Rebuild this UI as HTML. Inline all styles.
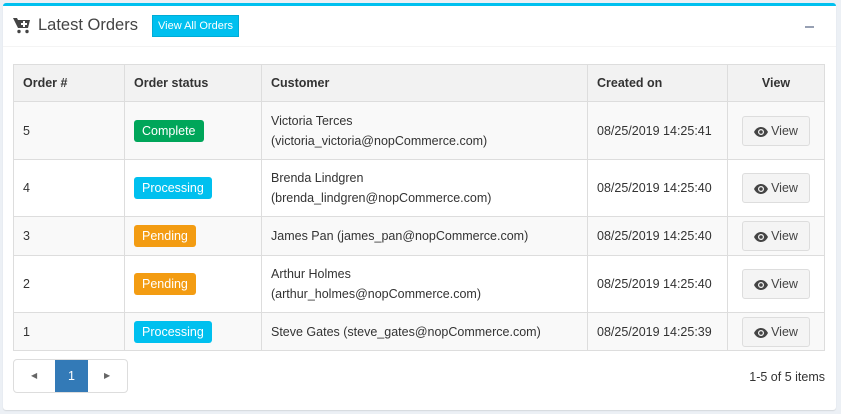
<!DOCTYPE html>
<html><head><style>
*{box-sizing:border-box;margin:0;padding:0}
body{width:841px;height:414px;background:#ecf0f5;font-family:"Liberation Sans",sans-serif;font-size:12.5px;color:#333;position:relative;overflow:hidden}
.box{position:absolute;left:3px;top:3px;width:833px;height:407px;background:#fff;border-top:3px solid #00c0ef;border-radius:3px;box-shadow:0 1px 1px rgba(0,0,0,.1)}
.hdr{height:41px;border-bottom:1px solid #f4f4f4;position:relative}
.title{position:absolute;left:35px;top:10px;font-size:16.5px;color:#444}
.cart{position:absolute;left:10px;top:12px}
.btnall{position:absolute;left:149px;top:9px;background:#00c0ef;color:#fff;font-size:11px;padding:4px 5px;border:1px solid #00acd6}
.minus{position:absolute;right:22px;top:20px;width:9px;height:2px;background:#97a0b3}
table{position:absolute;left:10px;top:58px;width:812px;border-collapse:collapse}
td,th{border:1px solid #ddd;padding:0 9px;text-align:left;vertical-align:middle;line-height:20px}
th{background:#f2f2f2;height:37px;font-weight:bold}
tr.o td{background:#f9f9f9}
.lbl{display:inline-block;color:#fff;padding:1px 8px;border-radius:3px;font-size:12.5px}
.g{background:#00a65a}.b{background:#00c0ef}.y{background:#f39c12}
.vb{display:inline-block;border:1px solid #ddd;background:#f4f4f4;border-radius:3px;padding:4px 11px;color:#444}
.vb svg{vertical-align:-2px;margin-right:3px}
.pg{position:absolute;left:10px;top:353px;width:115px;height:34px;border:1px solid #ddd;border-radius:4px;overflow:hidden}
.pg .a{position:absolute;left:41px;top:0;width:33px;height:34px;background:#337ab7;color:#fff;text-align:center;line-height:33px}
.info{position:absolute;right:11px;top:364px}
</style></head><body>
<div class="box">
<div class="hdr">
<svg class="cart" width="18" height="16" viewBox="0 0 18 16"><path d="M0 0h4l1 2h12l-2 8H5z" fill="#444"/><circle cx="6" cy="13.5" r="1.7" fill="#444"/><circle cx="14" cy="13.5" r="1.7" fill="#444"/><path d="M10 3h2v2h2v2h-2v2h-2V7H8V5h2z" fill="#fff"/></svg>
<div class="title">Latest Orders</div>
<div class="btnall">View All Orders</div>
<div class="minus"></div>
</div>
<table>
<tr><th style="width:111px">Order #</th><th style="width:137px">Order status</th><th style="width:326px">Customer</th><th style="width:140px">Created on</th><th style="text-align:center">View</th></tr>
<tr class="o" style="height:58px"><td>5</td><td><span class="lbl g">Complete</span></td><td>Victoria Terces<br>(victoria_victoria@nopCommerce.com)</td><td>08/25/2019 14:25:41</td><td style="text-align:center"><span class="vb"><svg width="14" height="10" viewBox="0 0 14 10"><path d="M0 5C2 1 5 0 7 0s5 1 7 5c-2 4-5 5-7 5S2 9 0 5z" fill="#444"/><circle cx="7" cy="5" r="3" fill="#f4f4f4"/><circle cx="7" cy="5" r="1.8" fill="#444"/></svg>View</span></td></tr>
<tr style="height:57px"><td>4</td><td><span class="lbl b">Processing</span></td><td>Brenda Lindgren<br>(brenda_lindgren@nopCommerce.com)</td><td>08/25/2019 14:25:40</td><td style="text-align:center"><span class="vb"><svg width="14" height="10" viewBox="0 0 14 10"><path d="M0 5C2 1 5 0 7 0s5 1 7 5c-2 4-5 5-7 5S2 9 0 5z" fill="#444"/><circle cx="7" cy="5" r="3" fill="#f4f4f4"/><circle cx="7" cy="5" r="1.8" fill="#444"/></svg>View</span></td></tr>
<tr class="o" style="height:39px"><td>3</td><td><span class="lbl y">Pending</span></td><td>James Pan (james_pan@nopCommerce.com)</td><td>08/25/2019 14:25:40</td><td style="text-align:center"><span class="vb"><svg width="14" height="10" viewBox="0 0 14 10"><path d="M0 5C2 1 5 0 7 0s5 1 7 5c-2 4-5 5-7 5S2 9 0 5z" fill="#444"/><circle cx="7" cy="5" r="3" fill="#f4f4f4"/><circle cx="7" cy="5" r="1.8" fill="#444"/></svg>View</span></td></tr>
<tr style="height:57px"><td>2</td><td><span class="lbl y">Pending</span></td><td>Arthur Holmes<br>(arthur_holmes@nopCommerce.com)</td><td>08/25/2019 14:25:40</td><td style="text-align:center"><span class="vb"><svg width="14" height="10" viewBox="0 0 14 10"><path d="M0 5C2 1 5 0 7 0s5 1 7 5c-2 4-5 5-7 5S2 9 0 5z" fill="#444"/><circle cx="7" cy="5" r="3" fill="#f4f4f4"/><circle cx="7" cy="5" r="1.8" fill="#444"/></svg>View</span></td></tr>
<tr class="o" style="height:38px"><td>1</td><td><span class="lbl b">Processing</span></td><td>Steve Gates (steve_gates@nopCommerce.com)</td><td>08/25/2019 14:25:39</td><td style="text-align:center"><span class="vb"><svg width="14" height="10" viewBox="0 0 14 10"><path d="M0 5C2 1 5 0 7 0s5 1 7 5c-2 4-5 5-7 5S2 9 0 5z" fill="#444"/><circle cx="7" cy="5" r="3" fill="#f4f4f4"/><circle cx="7" cy="5" r="1.8" fill="#444"/></svg>View</span></td></tr>
</table>
<div class="pg"><span style="position:absolute;left:17px;top:11px;font-size:8px;color:#666">◀</span><div class="a">1</div><span style="position:absolute;left:90px;top:11px;font-size:8px;color:#666">▶</span></div>
<div class="info">1-5 of 5 items</div>
</div>
</body></html>
